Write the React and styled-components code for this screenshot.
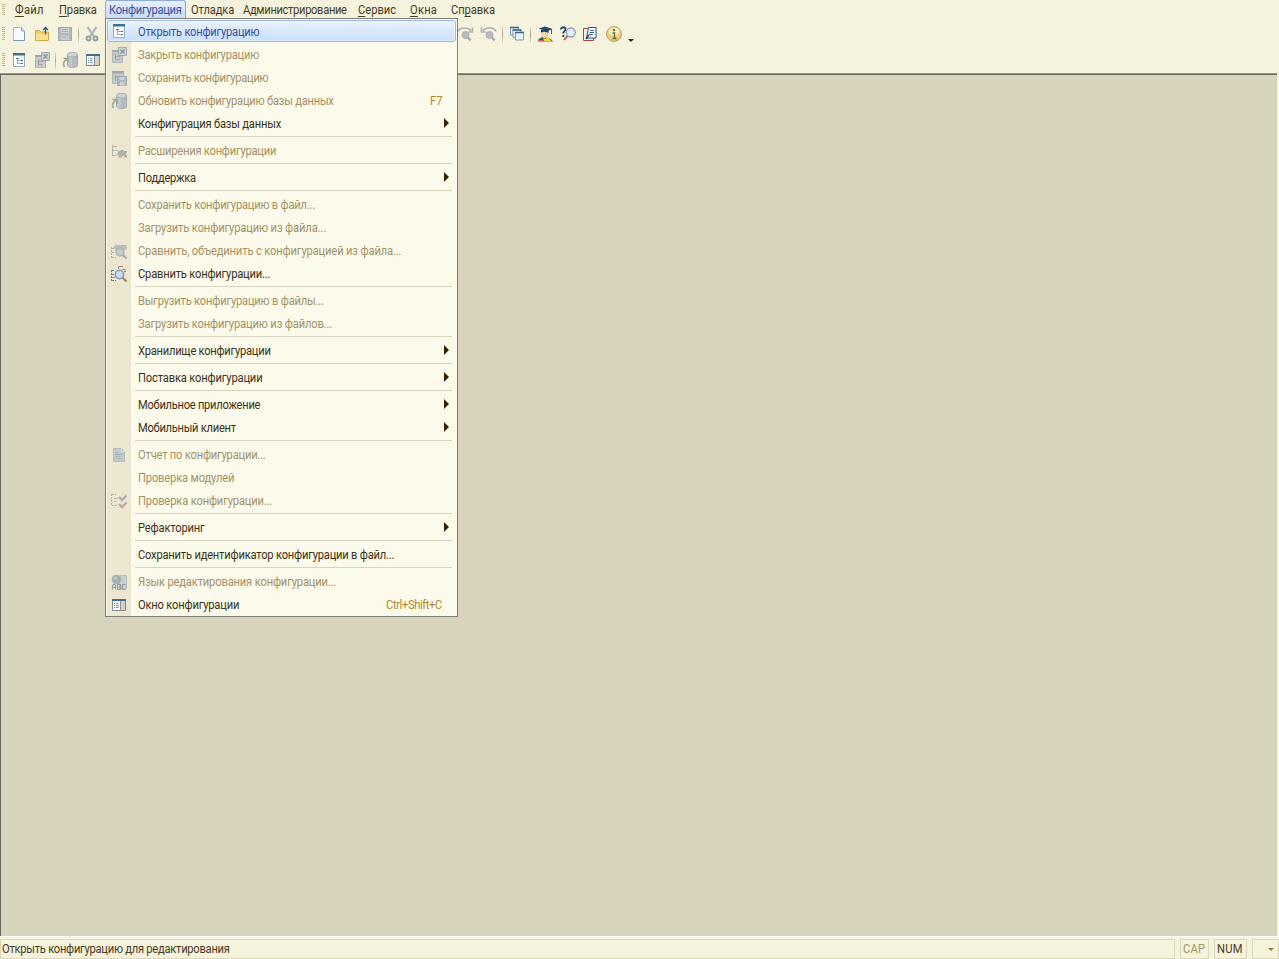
import React, { useLayoutEffect, useRef, useState } from 'react';
import styled, { createGlobalStyle, css } from 'styled-components';

const Global = createGlobalStyle`
  html, body { margin: 0; padding: 0; height: 100%; overflow: hidden; }
  #root { height: 100%; }
  * { box-sizing: border-box; }
  body { font-family: Roboto, "Liberation Sans", sans-serif; font-size: 12px; color: #473c1e; }
`;

const Screen = styled.div`
  position: relative;
  display: flex;
  flex-direction: column;
  width: 100%;
  height: 959px;
  background: #f5f2dd;
`;
const MenuBar = styled.nav`
  display: flex;
  align-items: flex-start;
  height: 20px;
  padding-left: 2px;
`;
const Grip = styled.span`
  flex: none;
  width: 3px;
  height: ${p => p.$h}px;
  margin-top: ${p => p.$top}px;
  background: repeating-linear-gradient(to bottom, #bdb598 0 1px, transparent 1px 2px);
`;
const MenuTitle = styled.span`
  flex: none;
  height: 18px;
  line-height: 19px;
  margin-left: ${p => p.$gap}px;
  padding: 0 3px;
  border: 1px solid transparent;
  border-bottom: 0;
  ${p => p.$open && css`
    color: #3a4f9c;
    border-color: #8fa9d8;
    border-radius: 3px 3px 0 0;
    background: linear-gradient(#e6effc, #c5dcfa);
  `}
`;
const FitBox = styled.span`
  display: inline-block;
  flex: none;
  line-height: inherit;
  vertical-align: top;
`;
const Narrow = styled.span`
  display: inline-block;
  white-space: pre;
  line-height: inherit;
  vertical-align: top;
  transform: scaleX(0.93);
  transform-origin: left top;
`;
const Underlined = styled.u`
  text-decoration: underline;
  text-underline-offset: 2px;
  text-decoration-skip-ink: none;
`;
const Toolbar = styled.div`
  display: flex;
  align-items: flex-start;
  height: ${p => p.$h}px;
  padding-left: 2px;
`;
const Tool = styled.span`
  flex: none;
  width: 16px;
  height: 16px;
  margin: ${p => p.$top}px 0 0 ${p => p.$gap}px;
`;
const ToolSeparator = styled.span`
  flex: none;
  width: 1px;
  height: 17px;
  margin: ${p => p.$top}px 0 0 ${p => p.$gap}px;
  background: linear-gradient(#e6e1ca, #aaa58e 50%, #e6e1ca);
`;
const MoreArrow = styled.span`
  width: 0;
  height: 0;
  margin: 19px 0 0 6px;
  border: 3px solid transparent;
  border-top-color: #3b2c08;
  border-bottom: 0;
`;
const Workspace = styled.main`
  flex: 1;
  margin-right: 1px;
  border-top: 1px solid #98968a;
  border-right: 1px solid #f7f6ec;
`;
const WorkspaceInner = styled.div`
  height: 100%;
  background: #d8d3bd;
  border-top: 1px solid #69675f;
  border-left: 1px solid #69675f;
`;
const StatusBar = styled.footer`
  display: flex;
  gap: 5px;
  height: 23px;
  padding: 2px 0 1px;
  border-top: 1px solid #fdfdf6;
`;
const StatusCell = styled.div`
  flex: ${p => (p.$w ? 'none' : '1')};
  width: ${p => (p.$w ? p.$w + 'px' : 'auto')};
  height: 20px;
  line-height: 19px;
  padding-left: ${p => (p.$w ? 1.5 : 1)}px;
  border: 1px solid #dcd8b9;
  color: ${p => (p.$muted ? '#a3946a' : '#473c1e')};
`;
const StatusArrow = styled.span`
  display: block;
  width: 0;
  margin: 8px 0 0 13.5px;
  border: 3px solid transparent;
  border-top-color: #8c7b48;
  border-bottom: 0;
`;
const Menu = styled.div`
  position: absolute;
  left: 105px;
  top: 18px;
  width: 353px;
  padding: 1px 1px 0 1px;
  border: 1px solid #7c7e79;
  background: #fcfaeb;
`;
const MenuBody = styled.div`
  background: linear-gradient(to right, #ede6d0 24px, transparent 24px);
`;
const MenuRow = styled.div`
  display: flex;
  align-items: center;
  height: 23px;
  padding: 2px 14px 0 4px;
  line-height: 21px;
  color: ${p => (p.$off ? '#a19268' : '#3b3218')};
`;
const ActiveRow = styled(MenuRow)`
  height: 22px;
  margin: 0 0 1px 0;
  padding: 2px 13px 0 3px;
  line-height: 20px;
  color: #3a4f9c;
  border: 1px solid #9db7e4;
  border-radius: 3px;
  box-shadow: inset 0 0 0 1px rgba(255, 255, 255, 0.35);
  background: linear-gradient(#eaf2fd, #c8dffc);
`;
const ActiveShell = styled.div`
  background: #fcfaeb;
`;
const RowIcon = styled.span`
  flex: none;
  width: 16px;
  height: 16px;
  margin: -2px 11px 0 0;
`;
const Shortcut = styled.span`
  margin-left: auto;
  color: #af8935;
`;
const SubArrow = styled.span`
  width: 0;
  margin: -4px -7px 0 auto;
  border: 5px solid transparent;
  border-left-color: #332408;
  border-right: 0;
`;
const Rule = styled.div`
  height: 1px;
  margin: 1px 4px 2px 28px;
  background: #d8d4c0;
`;
const Svg = styled.svg`
  display: block;
  overflow: visible;
`;

const NARROW = 0.93;

function Fit({ w, text, mark }) {
  const ref = useRef(null);
  const [spacing, setSpacing] = useState(0);
  useLayoutEffect(() => {
    const natural = ref.current.offsetWidth;
    setSpacing((w / NARROW - natural) / text.length);
  }, [w, text]);
  return (
    <FitBox style={{ width: w }}>
      <Narrow ref={ref} style={{ letterSpacing: spacing }}>
        {mark === undefined ? text : (
          <>{text.slice(0, mark)}<Underlined>{text[mark]}</Underlined>{text.slice(mark + 1)}</>
        )}
      </Narrow>
    </FitBox>
  );
}

const icons = {
  blank: (
    <>
      <path d="M2.500 1.500h8l3 3.500v9.500h-11z" fill="#f6fbff" stroke="#a9bccd" />
      <path d="M10.500 1.500v3.500h3" fill="#cfdeea" stroke="#8fa6bd" />
      <path d="M2.500 14.500h11M13.500 6v8" stroke="#7c99b4" />
    </>
  ),
  folder: (
    <>
      <path d="M1.500 14.500v-10h4l1.500 1.500h7.500v8.500z" fill="#f5cd66" stroke="#d0a54c" />
      <path d="M2 8h12v6H2z" fill="#fbe08c" />
      <path d="M11.500 8.500V1.500M9 4l2.500-2.500L14 4" fill="none" stroke="#2d6178" strokeWidth="1.300" />
    </>
  ),
  disk: (
    <>
      <path d="M1 1h14v14H1z" fill="#b4b9bd" />
      <path d="M4 2h8v5H4z" fill="#d0d3d2" />
      <path d="M4 9.500h8V15H4z" fill="#c8cccb" />
      <path d="M5 3.500h6M5 5.500h6M5 11.500h4" stroke="#a5abb0" />
      <path d="M1.500 1.500h13v13h-13z" fill="none" stroke="#a4aaaf" />
    </>
  ),
  cut: (
    <>
      <path d="M3.500 1l6.500 9.500M12.500 1L6 10.500" stroke="#abb3ba" strokeWidth="2.200" />
      <circle cx="4.500" cy="12.500" r="2" fill="none" stroke="#959da6" strokeWidth="1.800" />
      <circle cx="11.500" cy="12.500" r="2" fill="none" stroke="#959da6" strokeWidth="1.800" />
    </>
  ),
  tree: (
    <>
      <path d="M2.500 1.500h11v13h-11z" fill="#fbfdfe" stroke="#93abc0" />
      <path d="M2 1h12v2.500H2z" fill="#44708f" />
      <path d="M6.500 6v6M5 6.500h3M6.500 8.500h3M6.500 11.500h3" fill="none" stroke="#9fb0ba" />
      <path d="M9.500 8.500h2.500M9.500 11.500h2.500M5 6.500h2.500" stroke="#536f80" />
    </>
  ),
  treeClose: (
    <>
      <path d="M1.500 3.500h10v12h-10z" fill="#c6cac9" stroke="#b3b8b9" />
      <path d="M1 3h6v2H1z" fill="#a2aaaf" />
      <path d="M4.500 7v5.500h4M4.500 9.500h2M7.500 9.500h2" fill="none" stroke="#979fa3" />
      <path d="M7.500 .5h8v8h-8z" fill="#ced2d3" stroke="#a2aab0" />
      <path d="M9.500 2.500l4 4M13.500 2.500l-4 4" stroke="#8b949b" strokeWidth="1.300" />
    </>
  ),
  treeSave: (
    <>
      <path d="M1.500 1.500h11v12h-11z" fill="#c6caca" stroke="#b1b7b8" />
      <path d="M1 1h12v2.500H1z" fill="#a0a8ad" />
      <path d="M4.500 5v6M5 6.500h2" stroke="#a0a6a8" />
      <path d="M6.500 6.500h9v9h-9z" fill="#afb6bb" stroke="#a3abb0" />
      <path d="M8.500 7h5v3h-5zM9 12h4.500v3.500H9z" fill="#cfd3d3" />
    </>
  ),
  database: (
    <>
      <path d="M5.500 2.500v11c0 2.700 10 2.700 10 0v-11" fill="#b4bbc1" stroke="#a5adb4" />
      <path d="M6 5v8.500c0 1 2.500 1.800 4 1.800V5z" fill="#c2c8cc" />
      <ellipse cx="10.500" cy="2.700" rx="5" ry="2.200" fill="#ced3d6" stroke="#a5adb4" />
      <path d="M2.500 15c-2-3-1-6.500 3-7.500M1.500 6.500h4.500v4" fill="none" stroke="#a2a898" strokeWidth="1.600" />
    </>
  ),
  panel: (
    <>
      <path d="M1.500 2.500h13v11h-13z" fill="#fbfcfb" stroke="#7c8890" />
      <path d="M1 2h14v2H1z" fill="#456d8b" />
      <path d="M9.500 4h4.500v9H9.500z" fill="#d6d0c8" />
      <path d="M9.500 4v10" stroke="#8a9399" />
      <path d="M3 6.500h1M5 6.500h2.500M3 8.500h1M5 8.500h2.500M3 10.500h1M5 10.500h2.500" stroke="#7890a2" />
    </>
  ),
  search: (
    <>
      <path d="M1 5.500C3 1 11 1 14 4.500M15.500 1.500v4.500h-4.500" fill="none" stroke="#a9b2b6" strokeWidth="1.700" />
      <circle cx="8.500" cy="9" r="3.500" fill="#b9bbc1" stroke="#b0b0b4" />
      <path d="M11 11.500l2.500 3" stroke="#a6a9b0" strokeWidth="2.400" />
    </>
  ),
  searchBack: (
    <>
      <path d="M15 5.500C13 1 5 1 2 4.500M.5 1.500v4.500h4.500" fill="none" stroke="#a9b2b6" strokeWidth="1.700" />
      <circle cx="8.500" cy="9" r="3.500" fill="#b9bbc1" stroke="#b0b0b4" />
      <path d="M11 11.500l2.500 3" stroke="#a6a9b0" strokeWidth="2.400" />
    </>
  ),
  windows: (
    <>
      {[[1.5, 1.5], [4, 4], [6.5, 6.5]].map(([x, y]) => (
        <g key={x}>
          <path d={`M${x} ${y}h8v7.500h-8z`} fill="#eaf3f9" stroke="#7f9fb8" />
          <path d={`M${x - 0.5} ${y}h9`} stroke="#3d6b8c" strokeWidth="1.600" />
        </g>
      ))}
    </>
  ),
  graduate: (
    <>
      <path d="M1 15.500c0-3 3-4.500 6-4.500 4 0 7 1.500 9 4.500z" fill="#35546e" />
      <path d="M6 11l2.500 2 2-2.500 4.500 5H7z" fill="#f0cf45" />
      <path d="M4 5h7v4c0 4-6 4-7 0z" fill="#f4cfb0" />
      <path d="M1.500 2.500L8 .5l7.500 2.500-6 2.500z" fill="#234b70" />
      <path d="M4 4v2.500c2-1 5-1 7.500.5V4.500" fill="#1d3c5c" />
      <path d="M14.500 3v5" stroke="#35607f" />
      <path d="M1 14.500h5" stroke="#d0684a" />
    </>
  ),
  help: (
    <>
      <path d="M1 3.500c0-3 5-3 4.500 0-.2 1.700-2.200 1.800-2.200 4M3.300 9v2" fill="none" stroke="#1f4866" strokeWidth="1.900" />
      <circle cx="10.800" cy="6.500" r="4.500" fill="#e0ecfa" stroke="#9b9cb6" strokeWidth="1.300" />
      <path d="M7.500 10l-3.500 4" stroke="#b5755d" strokeWidth="2" />
    </>
  ),
  book: (
    <>
      <path d="M1.500 2.500h10v12h-10z" fill="#f8efe8" stroke="#a44a3b" />
      <path d="M6.500 1.500h7.500v10.500H4.500z" fill="#fafcff" stroke="#2d5378" />
      <path d="M8 4.500h4M7.500 6.500h4.500M7 8.500h4" stroke="#3d678c" />
      <path d="M4 13l3-4" stroke="#24486c" strokeWidth="1.500" />
    </>
  ),
  info: (
    <>
      <circle cx="8" cy="8" r="7.400" fill="#f1cb7f" stroke="#b79b6c" />
      <ellipse cx="8" cy="5.500" rx="5.500" ry="4" fill="#faeac3" />
      <path d="M6.500 7h2v5.500M6.500 12.500h4" fill="none" stroke="#5d7230" strokeWidth="1.400" />
      <circle cx="8" cy="4" r="1.200" fill="#5d7230" />
    </>
  ),
  extension: (
    <>
      <path d="M1.500 2v11M2 3.500h4M2 7.500h5M2 12.500h4" fill="none" stroke="#b9b6aa" />
      <path d="M7 8h2.500V7h3v1H16v2h-1v2h1v2.500h-3V13h-2v1.500H7.500V12H6v-2h1z" fill="#b0afa9" />
    </>
  ),
  mergeOff: (
    <>
      <path d="M.5 4v11M1 5.500h3M1 9.500h3M1 14.500h4" fill="none" stroke="#aeada3" strokeDasharray="2 1" />
      <path d="M2 4l4-3.500v1.500h9.500v5H6v2z" fill="#bcbfb5" />
      <circle cx="9" cy="9" r="4" fill="#c4cac9" stroke="#abb1b1" strokeWidth="1.300" />
      <path d="M12 12l3.500 3.500" stroke="#a9adac" strokeWidth="2.200" />
    </>
  ),
  merge: (
    <>
      <path d="M.5 4v11M1 4.500h3M1 8.500h3M1 14.500h4" fill="none" stroke="#728087" strokeDasharray="2 1" />
      <path d="M8 .5h4M1 11.500h3" stroke="#d07560" />
      <path d="M7.500 .5v2M11.500 3.500h3M13 5.500h2" stroke="#6d8799" />
      <circle cx="8.500" cy="8.500" r="4.200" fill="#c3ddf2" stroke="#809bb5" strokeWidth="1.500" />
      <path d="M11.500 11.500l4 4" stroke="#a58060" strokeWidth="2" />
    </>
  ),
  report: (
    <>
      <path d="M2.500 1.500h8l3 3v10h-11z" fill="#c2cacd" stroke="#b3bdc2" />
      <path d="M4.500 5.500h3M4.500 7.500h7M4.500 9.500h5M4.500 11.500h7" stroke="#a8b4ba" />
      <path d="M10.500 1.500v3h3" fill="none" stroke="#dcdfdb" />
    </>
  ),
  check: (
    <>
      <path d="M.5 1v12M1 1.500h4M3 5.500h4M3 8.500h3M1 12.500h5" fill="none" stroke="#b5b3a6" strokeDasharray="2 1" />
      <path d="M8 4l3 3 4.500-4.500" fill="none" stroke="#aaafb3" strokeWidth="2.400" />
      <path d="M8 11l3 3 4.500-4.500" fill="none" stroke="#b7abab" strokeWidth="2.400" />
    </>
  ),
  language: (
    <>
      <path d="M8.500 1.500h7v13h-7z" fill="#cccfcb" stroke="#b9bebe" />
      <circle cx="5.500" cy="5.500" r="4.800" fill="#a5b0b3" />
      <circle cx="4.500" cy="4" r="2" fill="#b9c4c3" />
      <path d="M1.500 15.500v-4l1-1h1l1 1v4M1.500 13.500h3M6.500 15.500v-5h3v5zM6.500 13h3M14.500 10.500h-3v5h3" fill="none" stroke="#949fa5" strokeWidth="1.200" />
    </>
  ),
};

const Icon = ({ name }) => <Svg width="16" height="16" viewBox="0 0 16 16">{icons[name]}</Svg>;

const titles = [
  { text: 'Файл', w: 29, gap: 6, mark: 0 },
  { text: 'Правка', w: 38, gap: 7, mark: 0 },
  { text: 'Конфигурация', w: 73, gap: 4, open: true },
  { text: 'Отладка', w: 43, gap: 1 },
  { text: 'Администрирование', w: 104, gap: 1 },
  { text: 'Сервис', w: 38, gap: 3, mark: 0 },
  { text: 'Окна', w: 27, gap: 6, mark: 0 },
  { text: 'Справка', w: 44, gap: 6, mark: 2 },
];

const groups = [
  [
    { text: 'Открыть конфигурацию', w: 121, icon: 'tree', active: true },
    { text: 'Закрыть конфигурацию', w: 121, icon: 'treeClose', off: true },
    { text: 'Сохранить конфигурацию', w: 130, icon: 'treeSave', off: true },
    { text: 'Обновить конфигурацию базы данных', w: 196, icon: 'database', off: true, keys: 'F7', kw: 12.5 },
    { text: 'Конфигурация базы данных', w: 143, sub: true },
  ],
  [{ text: 'Расширения конфигурации', w: 138, icon: 'extension', off: true }],
  [{ text: 'Поддержка', w: 58, sub: true }],
  [
    { text: 'Сохранить конфигурацию в файл...', w: 177, off: true },
    { text: 'Загрузить конфигурацию из файла...', w: 188, off: true },
    { text: 'Сравнить, объединить с конфигурацией из файла...', w: 263, icon: 'mergeOff', off: true },
    { text: 'Сравнить конфигурации...', w: 132, icon: 'merge' },
  ],
  [
    { text: 'Выгрузить конфигурацию в файлы...', w: 186, off: true },
    { text: 'Загрузить конфигурацию из файлов...', w: 194, off: true },
  ],
  [{ text: 'Хранилище конфигурации', w: 133, sub: true }],
  [{ text: 'Поставка конфигурации', w: 124, sub: true }],
  [
    { text: 'Мобильное приложение', w: 122, sub: true },
    { text: 'Мобильный клиент', w: 98, sub: true },
  ],
  [
    { text: 'Отчет по конфигурации...', w: 128, icon: 'report', off: true },
    { text: 'Проверка модулей', w: 96, off: true },
    { text: 'Проверка конфигурации...', w: 134, icon: 'check', off: true },
  ],
  [{ text: 'Рефакторинг', w: 67, sub: true }],
  [{ text: 'Сохранить идентификатор конфигурации в файл...', w: 256.5 }],
  [
    { text: 'Язык редактирования конфигурации...', w: 198, icon: 'language', off: true },
    { text: 'Окно конфигурации', w: 101, icon: 'panel', keys: 'Ctrl+Shift+C', kw: 56 },
  ],
];

function Item({ item }) {
  const Row = item.active ? ActiveRow : MenuRow;
  const row = (
    <Row $off={item.off}>
      <RowIcon>{item.icon && <Icon name={item.icon} />}</RowIcon>
      <Fit text={item.text} w={item.w} />
      {item.keys && <Shortcut><Fit text={item.keys} w={item.kw} /></Shortcut>}
      {item.sub && <SubArrow />}
    </Row>
  );
  return item.active ? <ActiveShell>{row}</ActiveShell> : row;
}

export default function App() {
  return (
    <Screen>
      <Global />
      <MenuBar>
        <Grip $h={12} $top={4} />
        {titles.map(t => (
          <MenuTitle key={t.text} $gap={t.gap} $open={t.open}>
            <Fit text={t.text} w={t.w} mark={t.mark} />
          </MenuTitle>
        ))}
      </MenuBar>
      <Toolbar $h={27}>
        <Grip $h={14} $top={7} />
        <Tool $top={6} $gap={6}><Icon name="blank" /></Tool>
        <Tool $top={6} $gap={7}><Icon name="folder" /></Tool>
        <Tool $top={6} $gap={7}><Icon name="disk" /></Tool>
        <ToolSeparator $top={6} $gap={5} />
        <Tool $top={6} $gap={5}><Icon name="cut" /></Tool>
        <Tool $top={6} $gap={357}><Icon name="search" /></Tool>
        <Tool $top={6} $gap={8}><Icon name="searchBack" /></Tool>
        <ToolSeparator $top={6} $gap={5} />
        <Tool $top={6} $gap={6}><Icon name="windows" /></Tool>
        <ToolSeparator $top={6} $gap={5} />
        <Tool $top={6} $gap={6}><Icon name="graduate" /></Tool>
        <Tool $top={6} $gap={7}><Icon name="help" /></Tool>
        <Tool $top={6} $gap={6}><Icon name="book" /></Tool>
        <Tool $top={6} $gap={8}><Icon name="info" /></Tool>
        <MoreArrow />
      </Toolbar>
      <Toolbar $h={26}>
        <Grip $h={13} $top={6} />
        <Tool $top={5} $gap={6}><Icon name="tree" /></Tool>
        <Tool $top={5} $gap={7}><Icon name="treeClose" /></Tool>
        <ToolSeparator $top={5} $gap={5} />
        <Tool $top={5} $gap={6}><Icon name="database" /></Tool>
        <Tool $top={5} $gap={7}><Icon name="panel" /></Tool>
      </Toolbar>
      <Workspace><WorkspaceInner /></Workspace>
      <StatusBar>
        <StatusCell><Fit text="Открыть конфигурацию для редактирования" w={228} /></StatusCell>
        <StatusCell $w={29} $muted><Fit text="CAP" w={22} /></StatusCell>
        <StatusCell $w={33}><Fit text="NUM" w={26} /></StatusCell>
        <StatusCell $w={27}><StatusArrow /></StatusCell>
      </StatusBar>
      <Menu>
        <MenuBody>
          {groups.map((group, i) => (
            <React.Fragment key={i}>
              {i > 0 && <Rule />}
              {group.map(item => <Item key={item.text} item={item} />)}
            </React.Fragment>
          ))}
        </MenuBody>
      </Menu>
    </Screen>
  );
}
